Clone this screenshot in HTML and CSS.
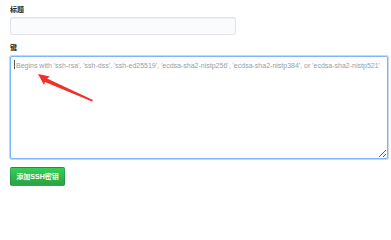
FILE: index.html
```html
<!DOCTYPE html>
<html lang="zh">
<head>
<meta charset="utf-8">
<title>SSH</title>
<link rel="stylesheet" href="styles.css">
</head>
<body>
<form class="form">
  <label class="label" for="title">标题</label>
  <input class="input" id="title" type="text">
  <label class="label label-key" for="key">键</label>
  <div class="ta-wrap">
    <textarea class="textarea" id="key" placeholder="Begins with 'ssh-rsa', 'ssh-dss', 'ssh-ed25519', 'ecdsa-sha2-nistp256', 'ecdsa-sha2-nistp384', or 'ecdsa-sha2-nistp521'"></textarea>
    <span class="caret"></span>
    <svg class="arrow" width="70" height="40" viewBox="0 0 70 40">
      <polygon points="0,0 12,2.5 9,4.5 55,26 54,27.5 7,8 6,11" fill="#f0302a"/>
    </svg>
  </div>
  <button class="btn" type="button">添加SSH密钥</button>
</form>
</body>
</html>
```
FILE: styles.css
```css
html, body {
  margin: 0;
  padding: 0;
  background: #ffffff;
}
.form {
  display: flex;
  flex-direction: column;
  align-items: flex-start;
  padding: 4px 0 0 10px;
  font-family: "Liberation Sans", "Noto Sans CJK SC", sans-serif;
  color: #24292e;
}
.label {
  display: block;
  font-size: 7px;
  font-weight: bold;
  line-height: 12px;
  height: 12px;
}
.input {
  box-sizing: border-box;
  width: 226px;
  height: 18px;
  margin: 1px 0 0;
  background: #fafbfc;
  border: 1px solid #e1e4e8;
  border-radius: 2px;
  box-shadow: inset 0 1px 1px rgba(27,31,35,0.05);
  outline: none;
}
.label-key {
  margin-top: 7px;
}
.ta-wrap {
  position: relative;
  margin-top: 2px;
}
.textarea {
  display: block;
  box-sizing: border-box;
  width: 378px;
  height: 103px;
  margin: 0;
  padding: 4px 5px;
  border: 1px solid #79b8ff;
  border-radius: 2px;
  box-shadow: 0 0 0 1px rgba(3,102,214,0.25);
  background: #ffffff;
  font-family: "Liberation Sans", sans-serif;
  font-size: 7px;
  line-height: 10px;
  outline: none;
}
.textarea::placeholder {
  color: #959da5;
}
.caret {
  position: absolute;
  left: 4px;
  top: 4px;
  width: 1px;
  height: 9px;
  background: #555;
}
.arrow {
  position: absolute;
  left: 28px;
  top: 18px;
}
.btn {
  box-sizing: border-box;
  margin-top: 8px;
  width: 55px;
  height: 19px;
  padding: 0;
  background: linear-gradient(#34d058, #28a745 90%);
  border: 1px solid rgba(27,31,35,0.2);
  border-radius: 2px;
  color: #ffffff;
  font-family: "Liberation Sans", "Noto Sans CJK SC", sans-serif;
  font-size: 7px;
  font-weight: bold;
  line-height: 17px;
  white-space: nowrap;
}
```
